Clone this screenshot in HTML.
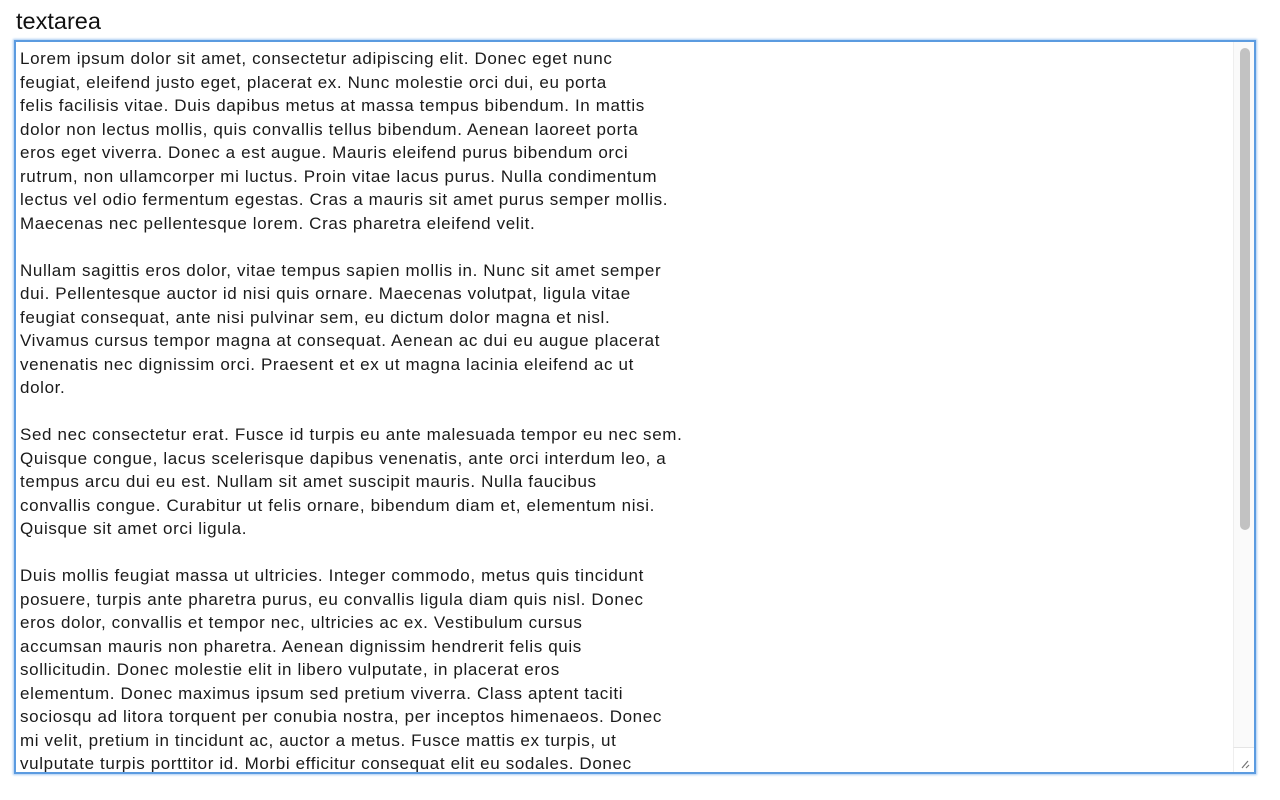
<!DOCTYPE html>
<html><head><meta charset="utf-8"><style>
html,body{margin:0;padding:0;background:#fff;width:1280px;height:800px;overflow:hidden}
.lbl{position:absolute;left:16px;top:8px;font:23.5px "Liberation Sans",Arial,sans-serif;color:#111}
.ta{position:absolute;left:14px;top:40px;width:1238px;height:730px;border:2px solid #5b9be0;box-shadow:0 0 2px 1px #a9cbf2;background:#fff;overflow:hidden}
.txt{position:absolute;left:4px;top:5px;white-space:pre;font:17px/23.5px "Liberation Sans",Arial,sans-serif;color:#1a1a1a;letter-spacing:0.63px}
.track{position:absolute;right:0;top:0;width:20px;height:706px;background:#fafafa;border-left:1px solid #eee}
.thumb{position:absolute;left:6px;top:6px;width:10px;height:482px;border-radius:5px;background:#c2c2c2}
.corner{position:absolute;right:0;bottom:0;width:20px;height:24px;background:#fff;border-left:1px solid #eee;border-top:1px solid #e5e5e5}
</style></head><body>
<div class="lbl">textarea</div>
<div class="ta">
<div class="txt">Lorem ipsum dolor sit amet, consectetur adipiscing elit. Donec eget nunc
feugiat, eleifend justo eget, placerat ex. Nunc molestie orci dui, eu porta
felis facilisis vitae. Duis dapibus metus at massa tempus bibendum. In mattis
dolor non lectus mollis, quis convallis tellus bibendum. Aenean laoreet porta
eros eget viverra. Donec a est augue. Mauris eleifend purus bibendum orci
rutrum, non ullamcorper mi luctus. Proin vitae lacus purus. Nulla condimentum
lectus vel odio fermentum egestas. Cras a mauris sit amet purus semper mollis.
Maecenas nec pellentesque lorem. Cras pharetra eleifend velit.

Nullam sagittis eros dolor, vitae tempus sapien mollis in. Nunc sit amet semper
dui. Pellentesque auctor id nisi quis ornare. Maecenas volutpat, ligula vitae
feugiat consequat, ante nisi pulvinar sem, eu dictum dolor magna et nisl.
Vivamus cursus tempor magna at consequat. Aenean ac dui eu augue placerat
venenatis nec dignissim orci. Praesent et ex ut magna lacinia eleifend ac ut
dolor.

Sed nec consectetur erat. Fusce id turpis eu ante malesuada tempor eu nec sem.
Quisque congue, lacus scelerisque dapibus venenatis, ante orci interdum leo, a
tempus arcu dui eu est. Nullam sit amet suscipit mauris. Nulla faucibus
convallis congue. Curabitur ut felis ornare, bibendum diam et, elementum nisi.
Quisque sit amet orci ligula.

Duis mollis feugiat massa ut ultricies. Integer commodo, metus quis tincidunt
posuere, turpis ante pharetra purus, eu convallis ligula diam quis nisl. Donec
eros dolor, convallis et tempor nec, ultricies ac ex. Vestibulum cursus
accumsan mauris non pharetra. Aenean dignissim hendrerit felis quis
sollicitudin. Donec molestie elit in libero vulputate, in placerat eros
elementum. Donec maximus ipsum sed pretium viverra. Class aptent taciti
sociosqu ad litora torquent per conubia nostra, per inceptos himenaeos. Donec
mi velit, pretium in tincidunt ac, auctor a metus. Fusce mattis ex turpis, ut
vulputate turpis porttitor id. Morbi efficitur consequat elit eu sodales. Donec</div>
<div class="track"><div class="thumb"></div></div>
<div class="corner"><svg width="20" height="24" viewBox="0 0 20 24"><path d="M8 20 L14 13 M12 20 L15 17" stroke="#777" stroke-width="1.2"/></svg></div>
</div>
</body></html>
